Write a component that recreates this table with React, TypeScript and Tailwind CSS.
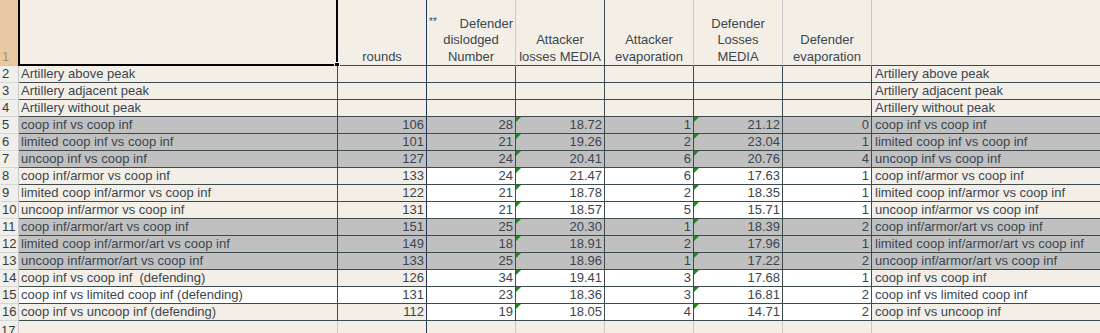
import type { ReactNode } from 'react';

type Tone = 'cream' | 'gray' | 'mixed' | 'white';

type Row = {
  n: number;
  label: string;
  right: string;
  vals?: (string | number)[];
  tone: Tone;
};

const rows: Row[] = [
  { n: 2, label: 'Artillery above peak', right: 'Artillery above peak', tone: 'cream' },
  { n: 3, label: 'Artillery adjacent peak', right: 'Artillery adjacent peak', tone: 'cream' },
  { n: 4, label: 'Artillery without peak', right: 'Artillery without peak', tone: 'cream' },
  { n: 5, label: 'coop inf vs coop inf', right: 'coop inf vs coop inf', vals: [106, 28, '18.72', 1, '21.12', 0], tone: 'gray' },
  { n: 6, label: 'limited coop inf vs coop inf', right: 'limited coop inf vs coop inf', vals: [101, 21, '19.26', 2, '23.04', 1], tone: 'gray' },
  { n: 7, label: 'uncoop inf vs coop inf', right: 'uncoop inf vs coop inf', vals: [127, 24, '20.41', 6, '20.76', 4], tone: 'gray' },
  { n: 8, label: 'coop inf/armor vs coop inf', right: 'coop inf/armor vs coop inf', vals: [133, 24, '21.47', 6, '17.63', 1], tone: 'mixed' },
  { n: 9, label: 'limited coop inf/armor vs coop inf', right: 'limited coop inf/armor vs coop inf', vals: [122, 21, '18.78', 2, '18.35', 1], tone: 'mixed' },
  { n: 10, label: 'uncoop inf/armor vs coop inf', right: 'uncoop inf/armor vs coop inf', vals: [131, 21, '18.57', 5, '15.71', 1], tone: 'mixed' },
  { n: 11, label: 'coop inf/armor/art vs coop inf', right: 'coop inf/armor/art vs coop inf', vals: [151, 25, '20.30', 1, '18.39', 2], tone: 'gray' },
  { n: 12, label: 'limited coop inf/armor/art vs coop inf', right: 'limited coop inf/armor/art vs coop inf', vals: [149, 18, '18.91', 2, '17.96', 1], tone: 'gray' },
  { n: 13, label: 'uncoop inf/armor/art vs coop inf', right: 'uncoop inf/armor/art vs coop inf', vals: [133, 25, '18.96', 1, '17.22', 2], tone: 'gray' },
  { n: 14, label: 'coop inf vs coop inf  (defending)', right: 'coop inf vs coop inf', vals: [126, 34, '19.41', 3, '17.68', 1], tone: 'mixed' },
  { n: 15, label: 'coop inf vs limited coop inf (defending)', right: 'coop inf vs limited coop inf', vals: [131, 23, '18.36', 3, '16.81', 2], tone: 'white' },
  { n: 16, label: 'coop inf vs uncoop inf (defending)', right: 'coop inf vs uncoop inf', vals: [112, 19, '18.05', 4, '14.71', 2], tone: 'mixed' },
];

const bgFor = (tone: Tone, inner: boolean) => {
  if (tone === 'gray') return 'bg-[#c0c0c0]';
  if (tone === 'white') return 'bg-white';
  if (tone === 'mixed' && inner) return 'bg-white';
  return 'bg-[#f3efe6]';
};

function Cell({
  children,
  className = '',
  flag = false,
}: {
  children?: ReactNode;
  className?: string;
  flag?: boolean;
}) {
  return (
    <div className={`relative flex items-center overflow-hidden whitespace-pre border-b ${className}`}>
      {flag && (
        <span className="absolute left-0 top-0 h-0 w-0 border-t-[5px] border-r-[5px] border-t-[#1f8a1f] border-r-transparent" />
      )}
      {children}
    </div>
  );
}

export default function App() {
  return (
    <div className="h-[333px] w-[1100px] overflow-hidden bg-[#f3efe6] text-[13px] text-[#3b4550] [font-family:'Liberation_Sans',Arial,sans-serif]">
      <div className="grid grid-cols-[19px_319px_89px_89px_89px_89px_89px_89px_1fr] grid-rows-[66px_repeat(16,17px)]">
        {/* header row */}
        <div className="flex items-end border-r border-b border-r-[#c8c8c8] border-b-[#c8c8c8] bg-[#e9c9a1] pl-[2px] leading-[17px] text-[#a09078]">
          1
        </div>
        <div className="relative border-l-2 border-r-2 border-b-2 border-black -ml-px">
          <span className="absolute -bottom-[4px] -right-[4px] h-[6px] w-[6px] border border-white bg-black" />
        </div>
        <div className="flex flex-col items-center justify-end border-r border-b border-r-[#233857] border-b-[#3d4b4f] leading-[16.5px]">
          rounds
        </div>
        <div className="flex flex-col justify-end border-r border-b border-r-[#c8c8c8] border-b-[#3d4b4f] text-center leading-[16.5px]">
          <div className="flex items-start justify-between pl-[2px] pr-[2px]">
            <span className="text-[10px] leading-[12px]">**</span>
            <span>Defender</span>
          </div>
          <div>dislodged</div>
          <div>Number</div>
        </div>
        <div className="flex flex-col justify-end border-r border-b border-r-[#3d4b4f] border-b-[#3d4b4f] text-center leading-[16.5px]">
          <div>Attacker</div>
          <div>losses MEDIA</div>
        </div>
        <div className="flex flex-col justify-end border-r border-b border-r-[#c8c8c8] border-b-[#3d4b4f] text-center leading-[16.5px]">
          <div>Attacker</div>
          <div>evaporation</div>
        </div>
        <div className="flex flex-col justify-end border-r border-b border-r-[#c8c8c8] border-b-[#3d4b4f] text-center leading-[16.5px]">
          <div>Defender</div>
          <div>Losses</div>
          <div>MEDIA</div>
        </div>
        <div className="flex flex-col justify-end border-r border-b border-r-[#c8c8c8] border-b-[#3d4b4f] text-center leading-[16.5px]">
          <div>Defender</div>
          <div>evaporation</div>
        </div>
        <div className="border-b border-b-[#3d4b4f]" />

        {/* data rows */}
        {rows.map((r) => (
          <div key={r.n} className="contents">
            <Cell className="border-r border-r-[#c8c8c8] border-b-[#d6d6d6] bg-[#f0efeb] pl-[2px] text-[#3a3a3a]">
              {r.n}
            </Cell>
            <Cell className={`border-r border-r-[#3d4b4f] border-b-[#3d4b4f] pl-[2px] ${bgFor(r.tone, false)}`}>
              {r.label}
            </Cell>
            <Cell className={`justify-end border-r border-r-[#233857] border-b-[#3d4b4f] pr-[2px] ${bgFor(r.tone, false)}`}>
              {r.vals?.[0]}
            </Cell>
            {[1, 2, 3, 4, 5].map((i) => (
              <Cell
                key={i}
                flag={!!r.vals && (i === 2 || i === 4)}
                className={`justify-end border-r border-r-[#3d4b4f] border-b-[#3d4b4f] pr-[2px] ${bgFor(r.tone, true)}`}
              >
                {r.vals?.[i]}
              </Cell>
            ))}
            <Cell className={`border-b-[#3d4b4f] pl-[3px] ${bgFor(r.tone, false)}`}>{r.right}</Cell>
          </div>
        ))}

        {/* row 17 */}
        <div className="flex items-start border-r border-r-[#c8c8c8] bg-[#f0efeb] pl-[1px] text-[#3a3a3a]">17</div>
        <div className="border-r border-r-[#c8c8c8]" />
        <div className="border-r border-r-[#233857]" />
        <div className="border-r border-r-[#c8c8c8]" />
        <div className="border-r border-r-[#c8c8c8]" />
        <div className="border-r border-r-[#c8c8c8]" />
        <div className="border-r border-r-[#c8c8c8]" />
        <div className="border-r border-r-[#c8c8c8]" />
        <div />
      </div>
    </div>
  );
}
